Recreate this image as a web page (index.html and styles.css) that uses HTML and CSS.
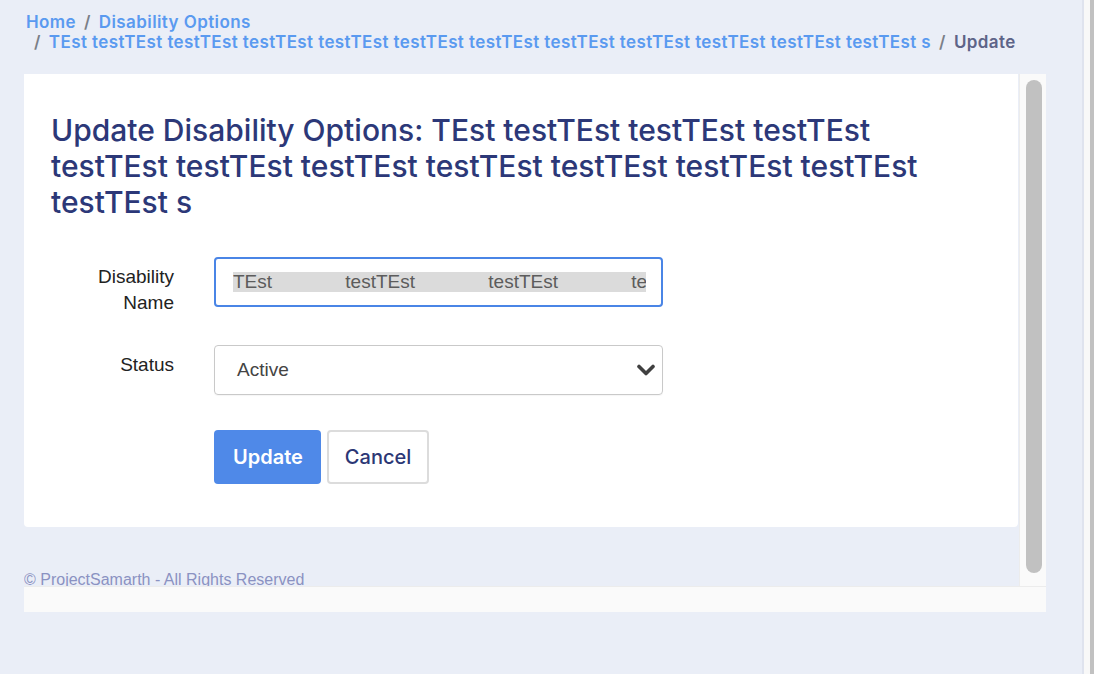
FILE: index.html
```html
<!DOCTYPE html>
<html lang="en">
<head>
<meta charset="utf-8">
<title>Update Disability Options</title>
<link rel="stylesheet" href="styles.css">
</head>
<body>
<div class="page">
  <nav class="crumbs">
    <ol class="crumb-list">
      <li class="crumb"><a href="#">Home</a></li>
      <li class="crumb"><a href="#">Disability Options</a></li>
      <li class="crumb"><a href="#">TEst testTEst testTEst testTEst testTEst testTEst testTEst testTEst testTEst testTEst testTEst testTEst s</a></li>
      <li class="crumb current">Update</li>
    </ol>
  </nav>

  <div class="frame">
    <div class="frame-row">
      <div class="viewport">
        <section class="card">
          <h1 class="title">Update Disability Options: TEst testTEst testTEst testTEst testTEst testTEst testTEst testTEst testTEst testTEst testTEst testTEst s</h1>
          <form class="form">
            <label class="label">Disability Name</label>
            <div class="field field-focus">
              <span class="sel">TEst testTEst testTEst testTEst testTEst testTEst testTEst</span>
            </div>

            <label class="label">Status</label>
            <div class="field field-select">
              <span class="select-text">Active</span>
              <svg class="chev" width="18" height="12" viewBox="0 0 18 12"><polyline points="2,2.5 9,9.5 16,2.5" fill="none" stroke="#404040" stroke-width="3.6" stroke-linecap="round" stroke-linejoin="round"/></svg>
            </div>

            <div class="spacer"></div>
            <div class="actions">
              <button type="button" class="btn btn-primary">Update</button>
              <button type="button" class="btn btn-light">Cancel</button>
            </div>
          </form>
        </section>
        <footer class="footer">© ProjectSamarth - All Rights Reserved</footer>
      </div>
      <div class="vtrack"><div class="vthumb"></div></div>
    </div>
    <div class="htrack"></div>
  </div>
</div>
<div class="outer-bar"><div class="outer-thumb"></div></div>
</body>
</html>
```

FILE: styles.css
```css
* { box-sizing: border-box; }
html, body { margin: 0; padding: 0; height: 100%; }
body {
  background: #eaeef7;
  display: flex;
  overflow: hidden;
  font-family: "Liberation Sans", Arial, sans-serif;
}
.page { flex: 1; min-width: 0; }
.outer-bar {
  width: 12px;
  display: flex;
  border-left: 2px solid #dfe3ee;
  background: #f8f8f8;
  justify-content: flex-end;
}
.outer-thumb { width: 4px; background: #c1c1c1; }

.crumbs { padding: 12px 0 0 26px; height: 74px; }
.crumb-list {
  list-style: none; margin: 0; padding: 0;
  display: flex; flex-wrap: wrap;
  font-family: Inter, "Noto Sans", sans-serif;
  font-weight: 600; font-size: 17px; line-height: 20px; letter-spacing: 0.4px;
}
.crumb a { color: #5a9af0; text-decoration: none; }
.crumb + .crumb { padding-left: 8px; }
.crumb + .crumb::before { content: "/"; color: #7a7f88; padding-right: 8px; }
.crumb.current { color: #5d6488; }

.frame { margin-left: 24px; width: 1022px; }
.frame-row { display: flex; height: 512px; }
.viewport { width: 995px; height: 512px; overflow: hidden; }
.vtrack {
  width: 27px; background: #fafafa; border-left: 1px solid #ececec;
  padding: 6px 4px 13px 6px;
}
.vthumb { height: 100%; background: #c1c1c1; border-radius: 8px; }
.htrack { height: 26px; background: #fafafa; border-top: 1px solid #ececec; }

.card {
  width: 994px; background: #fff; border-radius: 0 0 4px 4px;
  padding: 38px 27px 43px;
}
.title {
  margin: 0; font-family: Inter, "Noto Sans", sans-serif;
  font-weight: 500; font-size: 30px; line-height: 36px; color: #2c3878;
}
.form {
  margin-top: 37px;
  display: grid;
  grid-template-columns: 123px 449px;
  column-gap: 40px;
  row-gap: 29px;
  align-items: start;
}
.label {
  text-align: right; font-size: 19px; line-height: 26px; color: #222;
  padding-top: 7px;
}
.field {
  height: 50px; border-radius: 4px; display: flex; align-items: center;
  overflow: hidden; white-space: nowrap;
}
.field-focus { border: 2px solid #4a85e6; padding: 0 15px 0 17px; }
.sel {
  display: block; width: 100%; overflow: hidden;
  background: #dbdbdb; color: #5c5c5c; font-size: 19px; line-height: 20px;
  word-spacing: 68px;
}
.field-select {
  border: 1px solid #c9c9c9; padding: 0 7px 0 22px; justify-content: space-between;
  box-shadow: 0 1px 1px rgba(0,0,0,0.04);
}
.select-text { font-size: 19px; color: #444; }
.chev { display: block; }
.actions { display: flex; gap: 6px; margin-top: 6px; }
.btn {
  height: 54px; border-radius: 4px; font-family: Inter, "Noto Sans", sans-serif;
  font-size: 20px; cursor: pointer;
}
.btn-primary {
  background: #4f89e8; color: #fff; border: 0; font-weight: 600; padding: 0 18px 0 19px;
}
.btn-light {
  background: #fff; color: #2c3775; border: 2px solid #dcdcdc; font-weight: 500; padding: 0 16px;
}
.footer {
  margin-top: 44px; font-size: 16px; line-height: 18px; color: #8a92c2;
}
```
